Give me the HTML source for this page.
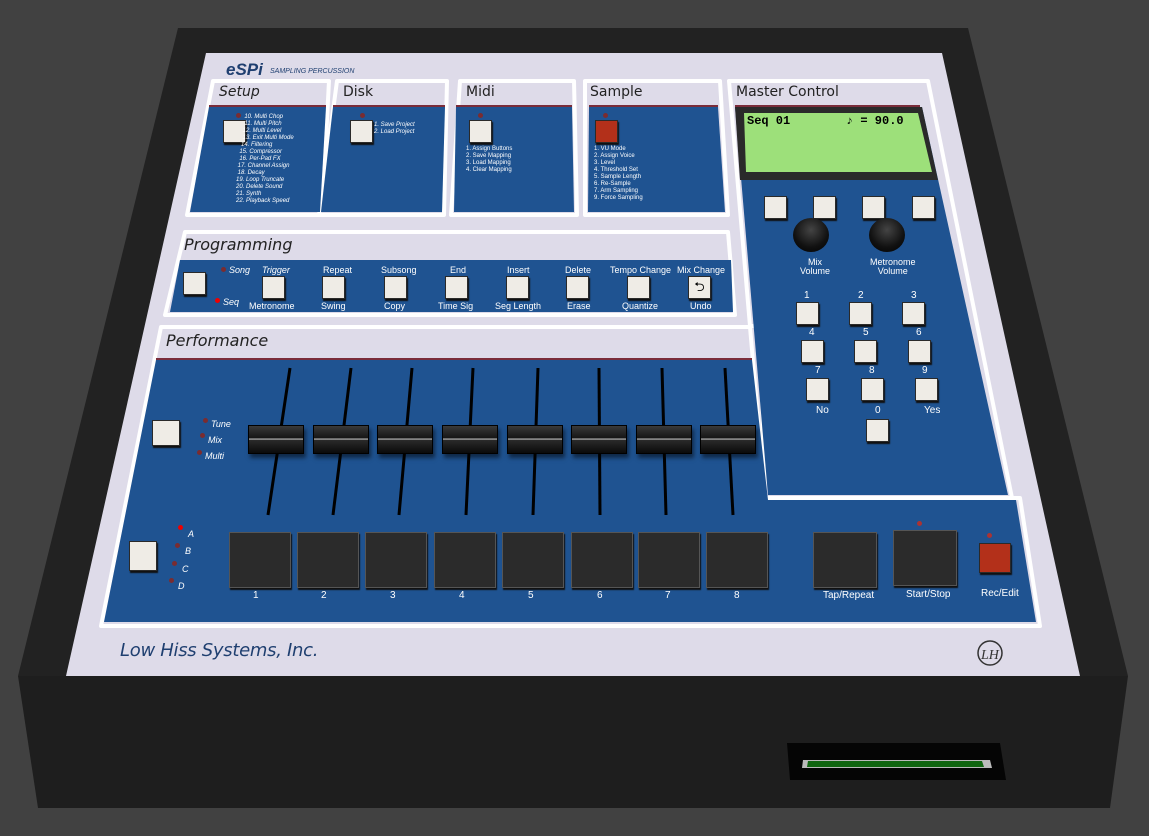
<!DOCTYPE html><html><head><meta charset="utf-8"><style>
body{margin:0;width:1149px;height:836px;overflow:hidden;background:#414141;font-family:"Liberation Sans",sans-serif;position:relative}
svg{position:absolute;left:0;top:0}
.a{position:absolute;white-space:nowrap}
.b{position:absolute;width:21px;height:21px;background:#efece6;border:1px solid #2a2a2a;box-shadow:1px 2px 1px #111}
.h{position:absolute;font-family:"DejaVu Sans",sans-serif;font-size:14px;color:#222}
.t{position:absolute;color:#fff;font-size:9px;white-space:nowrap}
.s{font-size:6px;color:#fff;font-style:italic;line-height:7px;position:absolute;white-space:pre}
.l{position:absolute;width:5px;height:5px;border-radius:50%;background:#7a2c30}
.pad{position:absolute;width:60px;height:54px;background:#2b2b2b;border:1px solid #555;box-shadow:1px 2px 1px #111}
.cap{position:absolute;width:54px;height:27px;background:linear-gradient(#3a3a3a,#151515 45%,#ddd 48%,#2a2a2a 52%,#0a0a0a);border:1px solid #000;box-shadow:2px 4px 4px rgba(0,0,0,.5)}
.n{position:absolute;color:#fff;font-size:10px}
</style></head><body>
<svg width="1149" height="836">
<polygon points="178,28 968,28 1128,676 18,676" fill="#222"/>
<polygon points="18,676 1128,676 1110,808 38,808" fill="#1e1e1e"/>
<polygon points="206,53 942,53 1080,676 66,676" fill="#dedbe9"/>
<polygon points="787,743 1000,743 1006,780 790,780" fill="#050505"/>
<polygon points="803,760 990,760 992,768 802,768" fill="#bbb"/>
<polygon points="808,761 982,761 984,767 807,767" fill="#116611"/>
<g stroke="#fff" stroke-width="4" fill="#dedbe9" stroke-linejoin="round">
<polygon points="213,81 329,81 322,215 187,215"/>
<polygon points="337,81 447,81 444,215 319,215"/>
<polygon points="460,81 574,81 577,215 451,215"/>
<polygon points="585,81 720,81 728,215 585,215"/>
<polygon points="729,81 928,81 1012,498 765,498 760,326 750,326"/>
<polygon points="185,232 728,232 735,315 165,315"/>
<polygon points="161,327 750,327 765,498 1020,498 1040,626 101,626"/>
</g>
<g fill="#1f5391">
<polygon points="209,107 326,107 320,212 190,212"/>
<polygon points="333,107 445,107 442,212 321,212"/>
<polygon points="456,107 572,107 574,212 454,212"/>
<polygon points="589,107 718,107 725,212 588,212"/>
<polygon points="735,107 922,107 1008,495 768,495"/>
<polygon points="180,260 731,260 733,312 170,312"/>
<polygon points="156,360 752,360 768,500 1016,500 1036,622 104,622"/>
</g>
<g stroke="#7a2c3a" stroke-width="2"><line x1="209" y1="106" x2="326" y2="106"/><line x1="333" y1="106" x2="445" y2="106"/><line x1="456" y1="106" x2="572" y2="106"/><line x1="589" y1="106" x2="718" y2="106"/><line x1="735" y1="106" x2="920" y2="106"/><line x1="156" y1="359" x2="752" y2="359"/></g>
<polygon points="735,107 922,107 938,180 740,180" fill="#2a2a2a"/>
<polygon points="744,113 918,113 932,172 746,172" fill="#9de07a"/>
<g stroke="#000" stroke-width="3">
<line x1="290" y1="368" x2="268" y2="515"/><line x1="351" y1="368" x2="333" y2="515"/><line x1="412" y1="368" x2="399" y2="515"/><line x1="473" y1="368" x2="466" y2="515"/><line x1="538" y1="368" x2="533" y2="515"/><line x1="599" y1="368" x2="600" y2="515"/><line x1="662" y1="368" x2="666" y2="515"/><line x1="725" y1="368" x2="733" y2="515"/>
</g>
<circle cx="990" cy="653" r="12" fill="none" stroke="#333" stroke-width="1.5"/>
<text x="981" y="659" font-family="Liberation Serif" font-size="14" font-style="italic" fill="#333">LH</text>
</svg>
<div class="a" style="left:226px;top:60px;font-size:17px;font-weight:bold;font-style:italic;color:#1f3f70">eSPi</div>
<div class="a" style="left:270px;top:68px;font-size:7px;font-style:italic;color:#1f3f70">SAMPLING PERCUSSION</div>
<div class="h" style="left:219px;top:84px;font-style:italic">Setup</div>
<div class="h" style="left:343px;top:84px">Disk</div>
<div class="h" style="left:466px;top:84px">Midi</div>
<div class="h" style="left:590px;top:84px">Sample</div>
<div class="h" style="left:736px;top:84px;font-size:14px">Master Control</div>
<div class="h" style="left:184px;top:235px;font-size:16px;font-style:italic">Programming</div>
<div class="h" style="left:166px;top:331px;font-size:16px;font-style:italic">Performance</div>
<div class="b" style="left:223px;top:120px"></div><div class="l" style="left:236px;top:113px"></div>
<div class="s" style="left:236px;top:114px;text-align:left">     10. Multi Chop
     11. Multi Pitch
    12. Multi Level
    13. Exit Multi Mode
   14. Filtering
  15. Compressor
  16. Per-Pad FX
 17. Channel Assign
 18. Decay
19. Loop Truncate
20. Delete Sound
21. Synth
22. Playback Speed</div>
<div class="b" style="left:350px;top:120px"></div><div class="l" style="left:360px;top:113px"></div>
<div class="s" style="left:374px;top:122px">1. Save Project
2. Load Project</div>
<div class="b" style="left:469px;top:120px"></div><div class="l" style="left:478px;top:113px"></div>
<div class="s" style="left:466px;top:146px;font-style:normal">1. Assign Buttons
2. Save Mapping
3. Load Mapping
4. Clear Mapping</div>
<div class="b" style="left:595px;top:120px;background:#b3301a"></div><div class="l" style="left:603px;top:113px"></div>
<div class="s" style="left:594px;top:146px;font-style:normal">1. VU Mode
2. Assign Voice
3. Level
4. Threshold Set
5. Sample Length
6. Re-Sample
7. Arm Sampling
9. Force Sampling</div>
<div class="a" style="left:747px;top:114px;font-family:'Liberation Mono';font-size:12px;font-weight:bold">Seq 01</div>
<div class="a" style="left:846px;top:114px;font-family:'Liberation Mono';font-size:12px;font-weight:bold">♪ = 90.0</div>
<div class="b" style="left:183px;top:272px"></div>
<div class="l" style="left:221px;top:267px"></div><div class="t" style="left:229px;top:265px;font-style:italic">Song</div>
<div class="l" style="left:215px;top:298px;background:#e00"></div><div class="t" style="left:223px;top:297px;font-style:italic">Seq</div>
<div class="t" style="left:262px;top:265px;font-style:italic">Trigger</div><div class="b" style="left:262px;top:276px"></div><div class="t" style="left:249px;top:301px">Metronome</div>
<div class="t" style="left:323px;top:265px">Repeat</div><div class="b" style="left:322px;top:276px"></div><div class="t" style="left:321px;top:301px">Swing</div>
<div class="t" style="left:381px;top:265px">Subsong</div><div class="b" style="left:384px;top:276px"></div><div class="t" style="left:384px;top:301px">Copy</div>
<div class="t" style="left:450px;top:265px">End</div><div class="b" style="left:445px;top:276px"></div><div class="t" style="left:438px;top:301px">Time Sig</div>
<div class="t" style="left:507px;top:265px">Insert</div><div class="b" style="left:506px;top:276px"></div><div class="t" style="left:495px;top:301px">Seg Length</div>
<div class="t" style="left:565px;top:265px">Delete</div><div class="b" style="left:566px;top:276px"></div><div class="t" style="left:567px;top:301px">Erase</div>
<div class="t" style="left:610px;top:265px">Tempo Change</div><div class="b" style="left:627px;top:276px"></div><div class="t" style="left:622px;top:301px">Quantize</div>
<div class="t" style="left:677px;top:265px">Mix Change</div><div class="b" style="left:688px;top:276px;text-align:center;font-size:13px;line-height:20px">⮌</div><div class="t" style="left:690px;top:301px">Undo</div>
<div class="b" style="left:764px;top:196px"></div><div class="b" style="left:813px;top:196px"></div><div class="b" style="left:862px;top:196px"></div><div class="b" style="left:912px;top:196px"></div>
<div class="a" style="left:793px;top:218px;width:36px;height:34px;border-radius:50%;background:radial-gradient(circle at 50% 35%,#444,#111 60%,#000);"></div>
<div class="a" style="left:869px;top:218px;width:36px;height:34px;border-radius:50%;background:radial-gradient(circle at 50% 35%,#444,#111 60%,#000);"></div>
<div class="t" style="left:800px;top:258px;text-align:center;line-height:9px">Mix<br>Volume</div>
<div class="t" style="left:870px;top:258px;text-align:center;line-height:9px">Metronome<br>Volume</div>
<div class="n" style="left:804px;top:290px">1</div><div class="b" style="left:796px;top:302px"></div>
<div class="n" style="left:858px;top:290px">2</div><div class="b" style="left:849px;top:302px"></div>
<div class="n" style="left:911px;top:290px">3</div><div class="b" style="left:902px;top:302px"></div>
<div class="n" style="left:809px;top:327px">4</div><div class="b" style="left:801px;top:340px"></div>
<div class="n" style="left:863px;top:327px">5</div><div class="b" style="left:854px;top:340px"></div>
<div class="n" style="left:916px;top:327px">6</div><div class="b" style="left:908px;top:340px"></div>
<div class="n" style="left:815px;top:365px">7</div><div class="b" style="left:806px;top:378px"></div>
<div class="n" style="left:869px;top:365px">8</div><div class="b" style="left:861px;top:378px"></div>
<div class="n" style="left:922px;top:365px">9</div><div class="b" style="left:915px;top:378px"></div>
<div class="n" style="left:816px;top:405px">No</div><div class="n" style="left:875px;top:405px">0</div><div class="n" style="left:924px;top:405px">Yes</div>
<div class="b" style="left:866px;top:419px"></div>
<div class="b" style="left:152px;top:420px;width:26px;height:24px"></div>
<div class="l" style="left:203px;top:418px"></div><div class="t" style="left:211px;top:419px;font-style:italic">Tune</div>
<div class="l" style="left:200px;top:433px"></div><div class="t" style="left:208px;top:435px;font-style:italic">Mix</div>
<div class="l" style="left:197px;top:450px"></div><div class="t" style="left:205px;top:451px;font-style:italic">Multi</div>
<div class="b" style="left:129px;top:541px;width:26px;height:28px"></div>
<div class="l" style="left:178px;top:525px;background:#e00"></div><div class="t" style="left:188px;top:529px;font-style:italic">A</div>
<div class="l" style="left:175px;top:543px"></div><div class="t" style="left:185px;top:546px;font-style:italic">B</div>
<div class="l" style="left:172px;top:561px"></div><div class="t" style="left:182px;top:564px;font-style:italic">C</div>
<div class="l" style="left:169px;top:578px"></div><div class="t" style="left:178px;top:581px;font-style:italic">D</div>
<div class="cap" style="left:248px;top:425px"></div><div class="cap" style="left:313px;top:425px"></div><div class="cap" style="left:377px;top:425px"></div><div class="cap" style="left:442px;top:425px"></div><div class="cap" style="left:507px;top:425px"></div><div class="cap" style="left:571px;top:425px"></div><div class="cap" style="left:636px;top:425px"></div><div class="cap" style="left:700px;top:425px"></div>
<div class="pad" style="left:229px;top:532px"></div><div class="pad" style="left:297px;top:532px"></div><div class="pad" style="left:365px;top:532px"></div><div class="pad" style="left:434px;top:532px"></div><div class="pad" style="left:502px;top:532px"></div><div class="pad" style="left:571px;top:532px"></div><div class="pad" style="left:638px;top:532px"></div><div class="pad" style="left:706px;top:532px"></div>
<div class="n" style="left:253px;top:590px">1</div><div class="n" style="left:321px;top:590px">2</div><div class="n" style="left:390px;top:590px">3</div><div class="n" style="left:459px;top:590px">4</div><div class="n" style="left:528px;top:590px">5</div><div class="n" style="left:597px;top:590px">6</div><div class="n" style="left:665px;top:590px">7</div><div class="n" style="left:734px;top:590px">8</div>
<div class="pad" style="left:813px;top:532px;width:62px"></div><div class="n" style="left:823px;top:590px">Tap/Repeat</div>
<div class="pad" style="left:893px;top:530px;width:62px"></div><div class="n" style="left:906px;top:589px">Start/Stop</div><div class="l" style="left:917px;top:521px;background:#a33"></div>
<div class="b" style="left:979px;top:543px;width:30px;height:28px;background:#b3301a"></div><div class="n" style="left:981px;top:588px">Rec/Edit</div><div class="l" style="left:987px;top:533px;background:#a33"></div>
<div class="a" style="left:120px;top:640px;font-size:18px;font-style:italic;color:#1f3f70;font-family:'DejaVu Sans',sans-serif;letter-spacing:-0.3px">Low Hiss Systems, Inc.</div>
</body></html>
